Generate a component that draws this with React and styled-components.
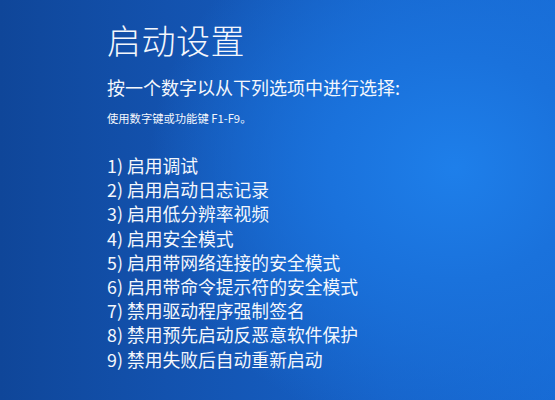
import React from "react";
import styled, { createGlobalStyle } from "styled-components";

const options = [
  "启用调试",
  "启用启动日志记录",
  "启用低分辨率视频",
  "启用安全模式",
  "启用带网络连接的安全模式",
  "启用带命令提示符的安全模式",
  "禁用驱动程序强制签名",
  "禁用预先启动反恶意软件保护",
  "禁用失败后自动重新启动",
];

const App = () => {
  return (
    <>
      <GlobalStyle />
      <Screen>
        <Content>
          <Title>启动设置</Title>
          <Prompt>按一个数字以从下列选项中进行选择:</Prompt>
          <Hint>使用数字键或功能键 F1-F9。</Hint>
          <OptionList>
            {options.map((label, i) => (
              <Option key={label}>
                {i + 1}) {label}
              </Option>
            ))}
          </OptionList>
        </Content>
      </Screen>
    </>
  );
};

export default App;

const GlobalStyle = createGlobalStyle`
  html, body {
    margin: 0;
    padding: 0;
    height: 100%;
  }

  body {
    font-family: "Noto Sans CJK SC", "Noto Sans", sans-serif;
    color: #f4f7fc;
  }
`;

const Screen = styled.div`
  width: 100vw;
  height: 100vh;
  overflow: hidden;
  background:
    radial-gradient(ellipse 65% 80% at 82% 42%, #1e7fea 0%, #1a72dc 35%, rgba(22, 96, 200, 0) 85%),
    linear-gradient(90deg, #0f4699 0%, #1352ae 30%, #1662c8 70%, #176ad4 100%);
`;

const Content = styled.div`
  display: flex;
  flex-direction: column;
  padding: 19px 0 0 107px;
`;

const Title = styled.h1`
  margin: 0;
  font-size: 34px;
  font-weight: 300;
  line-height: 42px;
  letter-spacing: 0.5px;
`;

const Prompt = styled.p`
  margin: 14px 0 0;
  font-size: 18px;
  line-height: 24px;
`;

const Hint = styled.p`
  margin: 11px 0 0;
  font-size: 11.3px;
  line-height: 16px;
`;

const OptionList = styled.ol`
  list-style: none;
  margin: 27px 0 0;
  padding: 0;
`;

const Option = styled.li`
  font-size: 17.8px;
  line-height: 24.2px;
  white-space: nowrap;
`;
